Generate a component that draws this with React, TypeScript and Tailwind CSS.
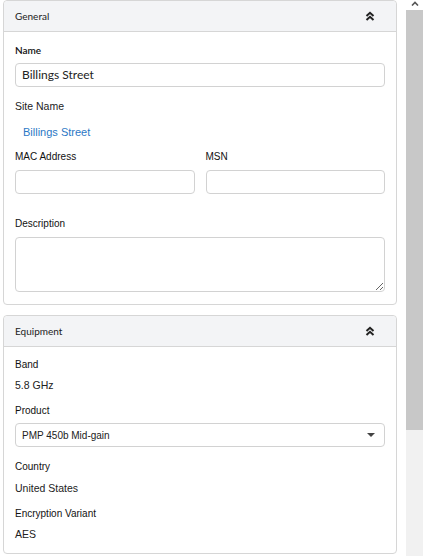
import React from 'react'

function ChevronsUp() {
  return (
    <svg width="10" height="10" viewBox="0 0 10 10" className="text-[#222]">
      <polyline points="1.5,5 5,1.8 8.5,5" fill="none" stroke="currentColor" strokeWidth="2" />
      <polyline points="1.5,9 5,5.8 8.5,9" fill="none" stroke="currentColor" strokeWidth="2" />
    </svg>
  )
}

function Panel({ title, children, className = '' }: { title: string; children: React.ReactNode; className?: string }) {
  return (
    <div className={`w-[394px] rounded-[4px] border border-[#d6d6d6] bg-white ${className}`}>
      <div className="flex h-[31px] items-center justify-between rounded-t-[4px] border-b border-[#d6d6d6] bg-[#f3f4f6] pl-[11px] pr-[21px]">
        <span className="font-['Lato',sans-serif] text-[10px] text-[#222]">{title}</span>
        <ChevronsUp />
      </div>
      {children}
    </div>
  )
}

function Label({ children, className = '' }: { children: React.ReactNode; className?: string }) {
  return <div className={`text-[10px] leading-[12px] text-[#111] ${className}`}>{children}</div>
}

function Value({ children, className = '' }: { children: React.ReactNode; className?: string }) {
  return <div className={`text-[10.5px] leading-[13px] text-[#222] ${className}`}>{children}</div>
}

function Input({ value = '', className = '' }: { value?: string; className?: string }) {
  return (
    <div className={`flex h-[24px] items-center rounded-[4px] border border-[#d2d2d2] bg-white px-[6px] font-['Lato',sans-serif] text-[12px] text-[#222] ${className}`}>
      {value}
    </div>
  )
}

export default function App() {
  return (
    <div className="flex h-[556px] w-[425px] overflow-hidden bg-white font-['Liberation_Sans',Arial,sans-serif]">
      <div className="w-[406px] pl-[3px]">
        <Panel title="General">
          <div className="px-[11px] pb-[12px] pt-[12px]">
            <Label className="font-['Lato',sans-serif] font-semibold">Name</Label>
            <Input value="Billings Street" className="mt-[7px]" />
            <Value className="mt-[13px]">Site Name</Value>
            <div className="mt-[12px] pl-[8px] text-[11px] leading-[14px] text-[#2b78c5]">Billings Street</div>
            <div className="mt-[12px] grid grid-cols-2 gap-x-[11px]">
              <div>
                <Label>MAC Address</Label>
                <Input className="mt-[7px]" />
              </div>
              <div>
                <Label>MSN</Label>
                <Input className="mt-[7px]" />
              </div>
            </div>
            <Label className="mt-[24px]">Description</Label>
            <textarea className="mt-[7px] block h-[55px] w-full resize rounded-[4px] border border-[#d2d2d2] bg-white outline-none" />
          </div>
        </Panel>

        <Panel title="Equipment" className="mt-[10px]">
          <div className="px-[11px] pb-[12px] pt-[12px]">
            <Label>Band</Label>
            <Value className="mt-[8px]">5.8 GHz</Value>
            <Label className="mt-[13px]">Product</Label>
            <div className="mt-[6px] flex h-[24px] items-center justify-between rounded-[4px] border border-[#d2d2d2] bg-white pl-[6px] pr-[9px] text-[10px] text-[#222]">
              <span>PMP 450b Mid-gain</span>
              <span className="h-0 w-0 border-x-[4px] border-t-[4px] border-x-transparent border-t-[#444]" />
            </div>
            <Label className="mt-[14px]">Country</Label>
            <Value className="mt-[9px]">United States</Value>
            <Label className="mt-[13px]">Encryption Variant</Label>
            <Value className="mt-[8px]">AES</Value>
          </div>
        </Panel>
      </div>

      <div className="flex w-[17px] flex-col bg-[#f1f1f1]">
        <div className="flex h-[10px] items-start justify-center bg-white pt-[1px]">
          <svg width="8" height="5" viewBox="0 0 8 5">
            <polyline points="1,4.5 4,1.5 7,4.5" fill="none" stroke="#555" strokeWidth="1.6" />
          </svg>
        </div>
        <div className="h-[420px] bg-[#c8c8c8]" />
      </div>
    </div>
  )
}
